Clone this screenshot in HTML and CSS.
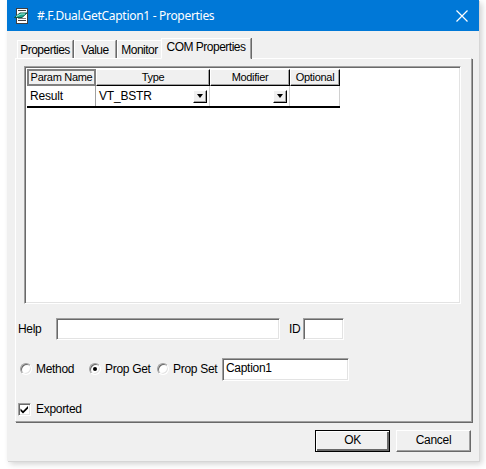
FILE: index.html
```html
<!DOCTYPE html>
<html>
<head>
<meta charset="utf-8">
<link rel="stylesheet" href="styles.css">
</head>
<body>
<div class="window">
  <div class="titlebar">
    <svg class="appicon" width="16" height="16" viewBox="0 0 16 16">
      <rect x="2.5" y="0.5" width="11" height="15" fill="#fff" stroke="#404040"/>
      <rect x="4" y="2" width="8" height="1" fill="#404040"/>
      <rect x="4" y="12" width="8" height="1" fill="#404040"/>
      <rect x="4" y="10" width="8" height="1" fill="#808080"/>
      <path d="M0.5 9.5 L6 5 L13 5 L8 9.5 Z" fill="#1fa98f" stroke="#0b5a4a" stroke-width="1"/>
      <path d="M2 8.5 L7 6 L11 6" stroke="#9ff0dc" stroke-width="1" fill="none"/>
    </svg>
    <span class="title">#.F.Dual.GetCaption1 - Properties</span>
    <svg class="close" width="12" height="12" viewBox="0 0 12 12">
      <path d="M0.5 0.5 L11.5 11.5 M11.5 0.5 L0.5 11.5" stroke="#fff" stroke-width="1.2"/>
    </svg>
  </div>
  <div class="content">
    <div class="tabs">
      <div class="tab t1">Properties</div>
      <div class="tab t2">Value</div>
      <div class="tab t3">Monitor</div>
      <div class="tab active">COM Properties</div>
    </div>
    <div class="panel">
      <div class="grid">
        <div class="row head">
          <div class="hc c1">Param Name</div>
          <div class="hc c2">Type</div>
          <div class="hc c3">Modifier</div>
          <div class="hc c4">Optional</div>
        </div>
        <div class="row data">
          <div class="dc c1">Result</div>
          <div class="dc c2"><span>VT_BSTR</span><span class="drop"><i></i></span></div>
          <div class="dc c3"><span></span><span class="drop"><i></i></span></div>
          <div class="dc c4"></div>
        </div>
      </div>
      <div class="helprow">
        <span class="lbl help">Help</span>
        <div class="edit helpedit"></div>
        <span class="lbl idl">ID</span>
        <div class="edit idedit"></div>
      </div>
      <div class="radiorow">
        <span class="radio"></span><span class="rl r1">Method</span>
        <span class="radio on"></span><span class="rl r2">Prop Get</span>
        <span class="radio"></span><span class="rl r3">Prop Set</span>
        <div class="edit capedit">Caption1</div>
      </div>
      <div class="checkrow">
        <span class="check"><svg width="9" height="9" viewBox="0 0 9 9"><path d="M0.5 3.5 L3 6 L8 1 L8 3.5 L3 8.5 L0.5 6 Z" fill="#000"/></svg></span>
        <span class="rl">Exported</span>
      </div>
    </div>
    <div class="buttons">
      <div class="btn default">OK</div>
      <div class="btn">Cancel</div>
    </div>
  </div>
</div>
</body>
</html>
```
FILE: styles.css
```css
html, body {
  margin: 0;
  padding: 0;
  background: #ffffff;
}
body {
  width: 486px;
  height: 469px;
  overflow: hidden;
  font-family: "Liberation Sans", Arial, sans-serif;
  font-size: 11px;
  letter-spacing: -0.3px;
  color: #000;
}
.window {
  margin-left: 7px;
  width: 472px;
  height: 461px;
  background: #f0f0f0;
  box-shadow: 1px 1px 0 #d6d6d6, 3px 3px 6px rgba(0,0,0,0.18);
  display: flex;
  flex-direction: column;
}
.titlebar {
  height: 31px;
  background: #0078d7;
  display: flex;
  align-items: center;
  color: #fff;
  flex: none;
}
.appicon {
  margin-left: 7px;
  margin-top: 1px;
}
.title {
  margin-left: 7px;
  font-family: "Noto Sans", "Open Sans", sans-serif;
  font-size: 12px;
  letter-spacing: -0.3px;
}
.close {
  margin-left: auto;
  margin-right: 11px;
}
.content {
  flex: 1;
  display: flex;
  flex-direction: column;
  padding: 7px 7px 0 8px;
}
.tabs {
  display: flex;
  align-items: flex-end;
  height: 20px;
  padding-left: 2px;
  position: relative;
  z-index: 1;
}
.tab {
  box-sizing: border-box;
  height: 18px;
  line-height: 18px;
  text-align: center;
  white-space: nowrap;
  font-size: 12px;
  letter-spacing: -0.5px;
  background: #f0f0f0;
  border-top: 1px solid #fff;
  border-left: 1px solid #fff;
  border-right: 1px solid #a0a0a0;
  box-shadow: 1px 0 0 #696969;
  margin-right: 1px;
}
.t1 { width: 56px; }
.t2 { width: 42px; }
.t3 { width: 45px; }
.tab.active {
  height: 21px;
  line-height: 17px;
  margin-left: -2px;
  width: 90px;
  border-bottom: 1px solid #f0f0f0;
  margin-bottom: -1px;
}
.panel {
  height: 364px;
  border-top: 1px solid #fff;
  border-left: 1px solid #fff;
  border-right: 1px solid #a0a0a0;
  border-bottom: 1px solid #a0a0a0;
  box-shadow: 1px 1px 0 #696969;
  display: flex;
  flex-direction: column;
  box-sizing: border-box;
}
.grid {
  margin: 7px 10px 0 8px;
  height: 238px;
  background: #fff;
  border-top: 1px solid #a0a0a0;
  border-left: 1px solid #a0a0a0;
  border-right: 1px solid #fff;
  border-bottom: 1px solid #fff;
  box-shadow: inset 1px 1px 0 #696969, inset -1px -1px 0 #e3e3e3;
  box-sizing: border-box;
  padding: 2px 0 0 2px;
}
.row {
  display: flex;
}
.head {
  height: 17px;
}
.hc {
  box-sizing: border-box;
  background: #f0f0f0;
  border-top: 1px solid #fff;
  border-left: 1px solid #fff;
  border-right: 1px solid #000;
  border-bottom: 1px solid #000;
  box-shadow: inset -1px -1px 0 #a0a0a0;
  text-align: center;
  line-height: 14px;
  white-space: nowrap;
}
.head .c1 {
  border: 1px solid #808080;
  box-shadow: inset 1px 1px 0 #808080, inset -1px -1px 0 #808080;
  line-height: 14px;
  background: #f0f0f0;
}
.c1 { width: 69px; }
.c2 { width: 114px; }
.c3 { width: 80px; }
.c4 { width: 50px; }
.data {
  height: 20px;
  border-bottom: 2px solid #000;
  width: 313px;
}
.dc {
  box-sizing: border-box;
  border-right: 1px solid #d0d0d0;
  padding-left: 3px;
  line-height: 20px;
  display: flex;
  align-items: center;
  justify-content: space-between;
  font-size: 12px;
  letter-spacing: -0.2px;
}
.dc.c1 { border-right-color: #a0a0a0; }
.drop {
  width: 14px;
  height: 13px;
  box-sizing: border-box;
  background: #f0f0f0;
  border-top: 1px solid #fff;
  border-left: 1px solid #fff;
  border-right: 1px solid #000;
  border-bottom: 1px solid #000;
  box-shadow: inset -1px -1px 0 #a0a0a0;
  margin-right: 2px;
  display: flex;
  align-items: center;
  justify-content: center;
}
.drop i {
  width: 0;
  height: 0;
  border-left: 3.5px solid transparent;
  border-right: 3.5px solid transparent;
  border-top: 4px solid #000;
  margin-right: 1px;
}
.helprow {
  display: flex;
  align-items: center;
  margin-top: 14px;
  height: 22px;
}
.lbl { font-size: 12px; }
.help { margin-left: 2px; width: 38px; }
.edit {
  box-sizing: border-box;
  background: #fff;
  border-top: 1px solid #a0a0a0;
  border-left: 1px solid #a0a0a0;
  border-right: 1px solid #fff;
  border-bottom: 1px solid #fff;
  box-shadow: inset 1px 1px 0 #696969, inset -1px -1px 0 #e3e3e3;
  height: 22px;
}
.helpedit { width: 224px; }
.idl { margin-left: 9px; width: 14px; }
.idedit { width: 41px; }
.radiorow {
  display: flex;
  align-items: center;
  margin-top: 17px;
  height: 24px;
}
.radio {
  flex: none;
  width: 12px;
  height: 12px;
  box-sizing: border-box;
  border-radius: 50%;
  background: #fff;
  border: 1px solid;
  border-color: #a0a0a0 #fff #fff #a0a0a0;
  box-shadow: inset 1px 1px 0 #696969, inset -1px -1px 0 #e3e3e3;
  position: relative;
  margin-left: 4px;
}
.radio.on::after {
  content: "";
  position: absolute;
  left: 3px;
  top: 3px;
  width: 4px;
  height: 4px;
  border-radius: 50%;
  background: #000;
}
.rl { font-size: 12px; margin-left: 4px; }
.radiorow .radio { margin-left: 0; }
.radiorow .radio:first-child { margin-left: 4px; }
.r1 { width: 53px; }
.r2 { width: 52px; }
.r3 { width: 49px; }
.capedit {
  width: 127px;
  height: 23px;
  font-size: 12px;
  padding: 2px 0 0 3px;
  line-height: 14px;
}
.checkrow {
  display: flex;
  align-items: center;
  margin-top: 21px;
}
.check {
  width: 13px;
  height: 13px;
  box-sizing: border-box;
  background: #fff;
  border: 1px solid;
  border-color: #a0a0a0 #fff #fff #a0a0a0;
  box-shadow: inset 1px 1px 0 #696969, inset -1px -1px 0 #e3e3e3;
  margin-left: 2px;
  display: flex;
  align-items: center;
  justify-content: center;
}
.checkrow .rl { margin-left: 5px; }
.buttons {
  display: flex;
  justify-content: flex-end;
  gap: 6px;
  margin-top: 8px;
  padding-right: 1px;
}
.btn {
  width: 75px;
  height: 22px;
  box-sizing: border-box;
  background: #f0f0f0;
  border-top: 1px solid #fff;
  border-left: 1px solid #fff;
  border-right: 1px solid #696969;
  border-bottom: 1px solid #696969;
  box-shadow: inset -1px -1px 0 #a0a0a0;
  text-align: center;
  line-height: 19px;
  font-size: 12px;
}
.btn.default {
  border: 1px solid #000;
  box-shadow: inset 1px 1px 0 #fff, inset -2px -2px 0 #696969, inset -1px -1px 0 #a0a0a0;
}
```
